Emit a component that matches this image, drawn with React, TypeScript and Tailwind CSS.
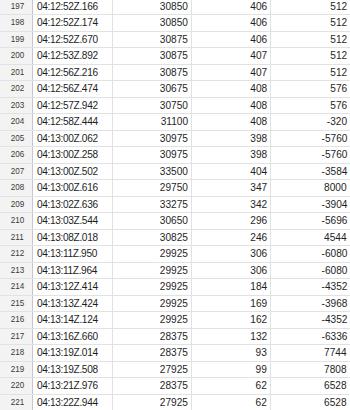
import React from "react";

const rows: [number, string, number, number, number][] = [
  [197, "04:12:52Z.166", 30850, 406, 512],
  [198, "04:12:52Z.174", 30850, 406, 512],
  [199, "04:12:52Z.670", 30875, 406, 512],
  [200, "04:12:53Z.892", 30875, 407, 512],
  [201, "04:12:56Z.216", 30875, 407, 512],
  [202, "04:12:56Z.474", 30675, 408, 576],
  [203, "04:12:57Z.942", 30750, 408, 576],
  [204, "04:12:58Z.444", 31100, 408, -320],
  [205, "04:13:00Z.062", 30975, 398, -5760],
  [206, "04:13:00Z.258", 30975, 398, -5760],
  [207, "04:13:00Z.502", 33500, 404, -3584],
  [208, "04:13:00Z.616", 29750, 347, 8000],
  [209, "04:13:02Z.636", 33275, 342, -3904],
  [210, "04:13:03Z.544", 30650, 296, -5696],
  [211, "04:13:08Z.018", 30825, 246, 4544],
  [212, "04:13:11Z.950", 29925, 306, -6080],
  [213, "04:13:11Z.964", 29925, 306, -6080],
  [214, "04:13:12Z.414", 29925, 184, -4352],
  [215, "04:13:13Z.424", 29925, 169, -3968],
  [216, "04:13:14Z.124", 29925, 162, -4352],
  [217, "04:13:16Z.660", 28375, 132, -6336],
  [218, "04:13:19Z.014", 28375, 93, 7744],
  [219, "04:13:19Z.508", 27925, 99, 7808],
  [220, "04:13:21Z.976", 28375, 62, 6528],
  [221, "04:13:22Z.944", 27925, 62, 6528],
];

const cell = "w-[79px] shrink-0 flex items-center justify-end pr-[3px] border-r border-[#e2e2e2]";

export default function App() {
  return (
    <div
      className="w-[350px] h-[410px] overflow-hidden bg-white text-[#1e1e1e] text-[11.5px]"
      style={{ fontFamily: '"Liberation Sans", Arial, sans-serif' }}
    >
      <div className="mt-[-1.5px]">
        {rows.map(([n, ts, b, c, d]) => (
          <div key={n} className="flex h-[16.5px] border-b border-[#e2e2e2]">
            <div className="w-[33px] shrink-0 flex items-center justify-center pl-[3px] bg-[#f3f3f3] border-r border-[#c8c8c8] text-[9px] text-[#3a3a3a]">
              <span className="scale-x-[0.9]">{n}</span>
            </div>
            <div className="w-[80px] shrink-0 flex items-center pl-[4px] border-r border-[#e2e2e2]">
              <span className="scale-x-[0.88] origin-left tracking-[-0.4px]">{ts}</span>
            </div>
            <div className={cell}>
              <span className="scale-x-[0.88] origin-right">{b}</span>
            </div>
            <div className={cell}>
              <span className="scale-x-[0.88] origin-right">{c}</span>
            </div>
            <div className="flex-1 flex items-center justify-end pr-[3px]">
              <span className="scale-x-[0.88] origin-right">{d}</span>
            </div>
          </div>
        ))}
      </div>
    </div>
  );
}
